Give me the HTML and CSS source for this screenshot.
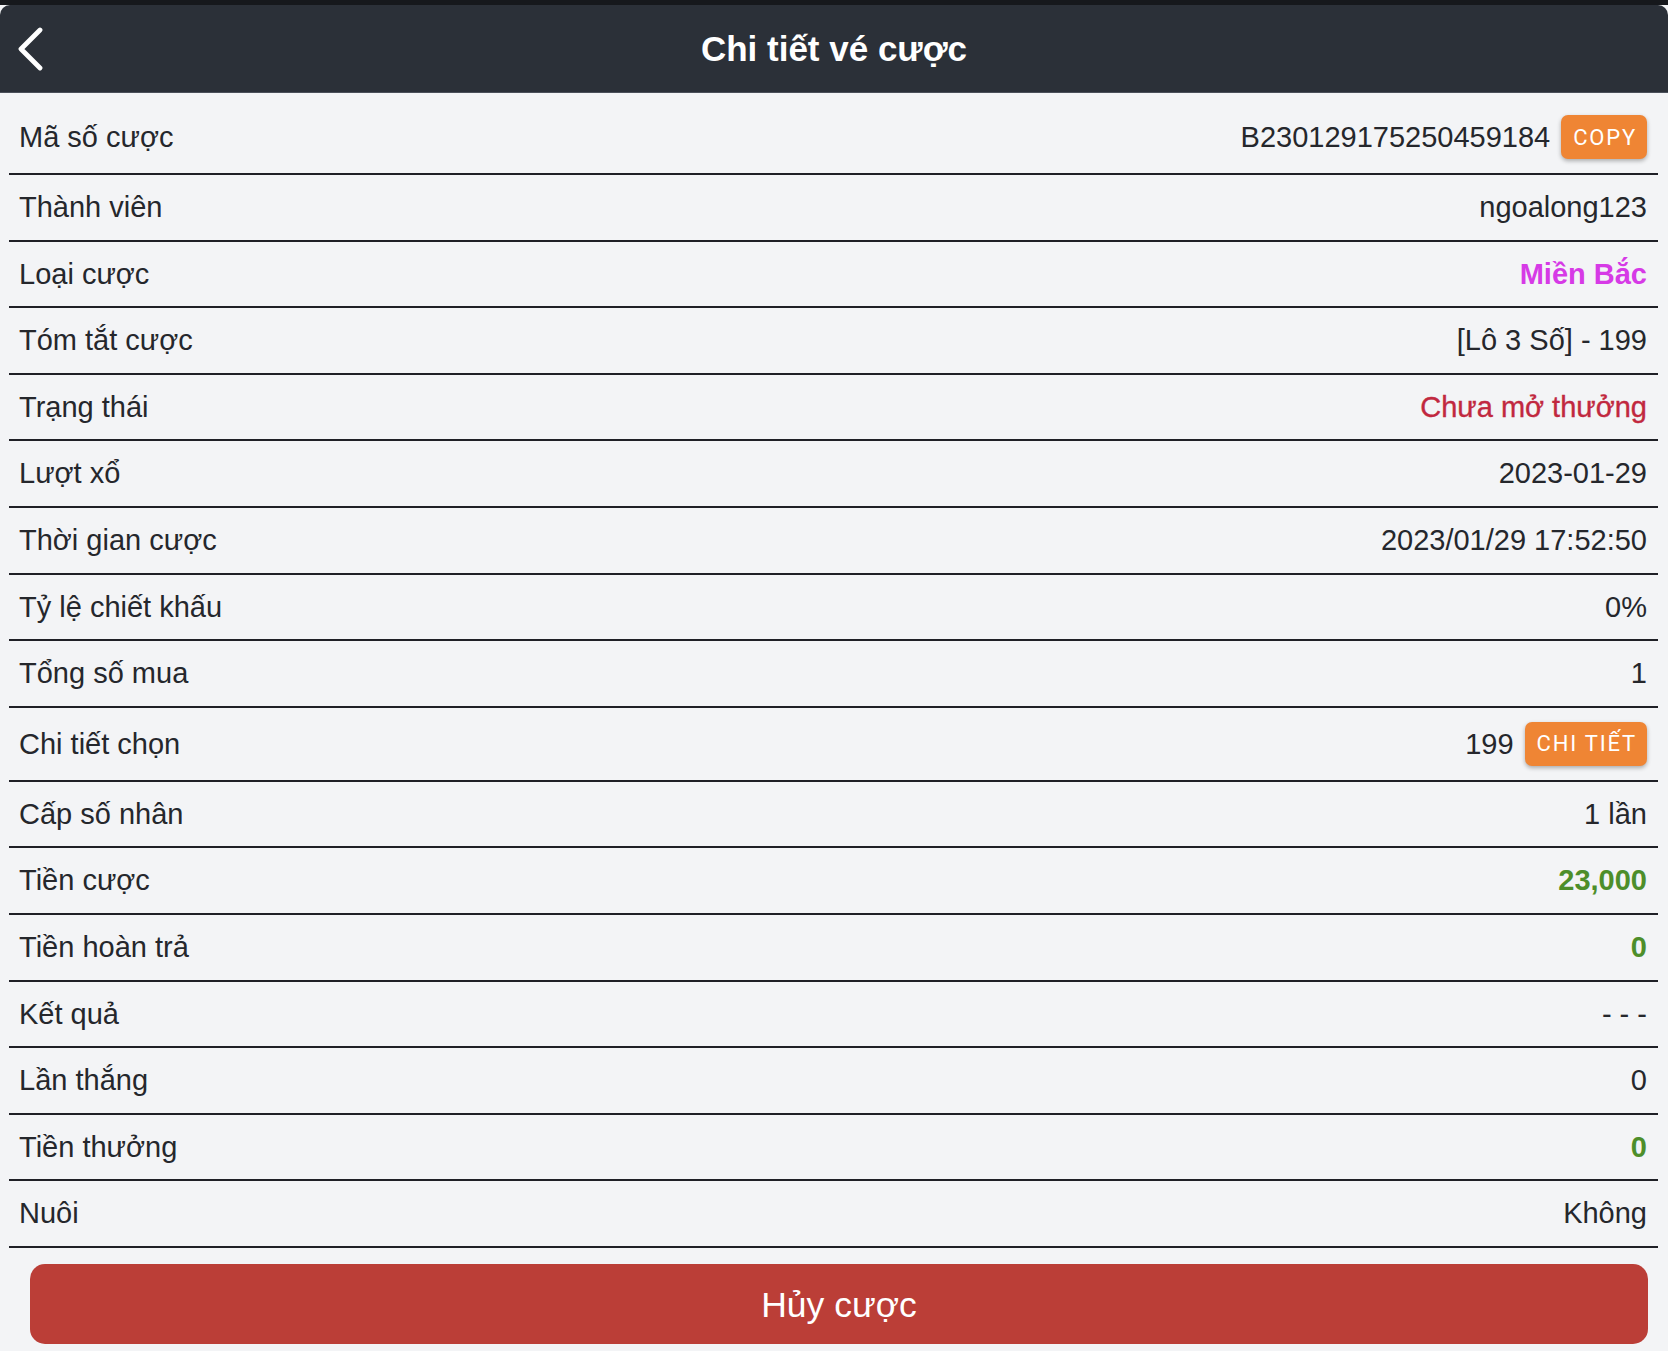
FILE: index.html
```html
<!DOCTYPE html>
<html lang="vi">
<head>
  <meta charset="UTF-8" />
  <meta name="viewport" content="width=device-width, initial-scale=1.0"/>
  <title>Chi tiết vé cược</title>
  <link rel="stylesheet" href="styles.css">
</head>
<body>

<div class="topbar"></div>
<header class="header">
  <button class="back" aria-label="Quay lại">
    <svg width="30" height="44" viewBox="0 0 30 44">
      <polyline points="24,3 5,22 24,41" fill="none" stroke="#fff" stroke-width="4.8" stroke-linecap="round" stroke-linejoin="round"/>
    </svg>
  </button>
  <h1>Chi tiết vé cược</h1>
  <span></span>
</header>

<div class="detail-list">
  <div class="row has-btn">
    <span class="label">Mã số cược</span>
    <span class="value">B230129175250459184 <button class="chip">COPY</button></span>
  </div>
  <div class="row"><span class="label">Thành viên</span><span class="value">ngoalong123</span></div>
  <div class="row"><span class="label">Loại cược</span><span class="value purple">Miền Bắc</span></div>
  <div class="row"><span class="label">Tóm tắt cược</span><span class="value">[Lô 3 Số] - 199</span></div>
  <div class="row"><span class="label">Trạng thái</span><span class="value red">Chưa mở thưởng</span></div>
  <div class="row"><span class="label">Lượt xổ</span><span class="value">2023-01-29</span></div>
  <div class="row"><span class="label">Thời gian cược</span><span class="value">2023/01/29 17:52:50</span></div>
  <div class="row"><span class="label">Tỷ lệ chiết khấu</span><span class="value">0%</span></div>
  <div class="row"><span class="label">Tổng số mua</span><span class="value">1</span></div>
  <div class="row has-btn">
    <span class="label">Chi tiết chọn</span>
    <span class="value">199 <button class="chip">CHI TIẾT</button></span>
  </div>
  <div class="row"><span class="label">Cấp số nhân</span><span class="value">1 lần</span></div>
  <div class="row"><span class="label">Tiền cược</span><span class="value green">23,000</span></div>
  <div class="row"><span class="label">Tiền hoàn trả</span><span class="value green">0</span></div>
  <div class="row"><span class="label">Kết quả</span><span class="value">- - -</span></div>
  <div class="row"><span class="label">Lần thắng</span><span class="value">0</span></div>
  <div class="row"><span class="label">Tiền thưởng</span><span class="value green">0</span></div>
  <div class="row"><span class="label">Nuôi</span><span class="value">Không</span></div>
</div>

<div class="actions">
  <button class="cancel-btn">Hủy cược</button>
</div>

</body>
</html>
```

FILE: styles.css
```css
body {
  font-family: 'Liberation Sans', Arial, sans-serif;
  background: #f3f4f6;
  color: #25272c;
  margin: 0;
  height: 1351px;
  overflow: hidden;
}

.topbar {
  height: 5px;
  background: #16181c;
}

.header {
  display: grid;
  grid-template-columns: 1fr auto 1fr;
  align-items: center;
  height: 87px;
  background: #2b3038;
  border-bottom: 1px solid #4b505a;
  border-radius: 10px 10px 0 0;
  margin-top: -5px;
  position: relative;
  top: 5px;
  margin-bottom: 5px;
}

.back {
  background: none;
  border: none;
  padding: 0 0 0 16px;
  height: 44px;
  cursor: pointer;
  justify-self: start;
  display: flex;
  align-items: center;
}

.header h1 {
  margin: 0;
  padding-top: 1px;
  color: #ffffff;
  font-size: 35px;
  font-weight: bold;
}

.detail-list {
  margin: 0 10px 0 9px;
  padding-top: 8px;
}

.row {
  display: flex;
  justify-content: space-between;
  align-items: center;
  padding: 14px 11px 14px 10px;
  line-height: 36.6px;
  font-size: 29px;
  border-bottom: 2px solid #1f2026;
}

.row.has-btn {
  padding-top: 14px;
  padding-bottom: 14px;
  line-height: 44px;
}

.value {
  display: flex;
  align-items: center;
  gap: 11px;
}

.purple {
  color: #d63ae6;
  font-weight: bold;
}

.red {
  color: #c1283f;
  -webkit-text-stroke: 0.35px #c1283f;
}

.green {
  color: #4d8e2a;
  font-weight: bold;
}

.chip {
  background: #ef8534;
  color: #ffffff;
  font-family: Roboto, 'Liberation Sans', sans-serif;
  font-weight: 400;
  font-size: 22px;
  letter-spacing: 1.8px;
  border: none;
  border-radius: 7px;
  height: 44px;
  padding: 0 10px 0 12px;
  box-shadow: 0 2px 4px rgba(0,0,0,0.3);
  cursor: pointer;
}

.actions {
  padding: 16px 20px 0 30px;
}

.cancel-btn {
  width: 100%;
  height: 80px;
  background: #bb3e37;
  color: #ffffff;
  border: none;
  border-radius: 15px;
  font-family: 'Liberation Sans', Arial, sans-serif;
  font-size: 35.5px;
  padding-top: 4px;
  cursor: pointer;
}
```
